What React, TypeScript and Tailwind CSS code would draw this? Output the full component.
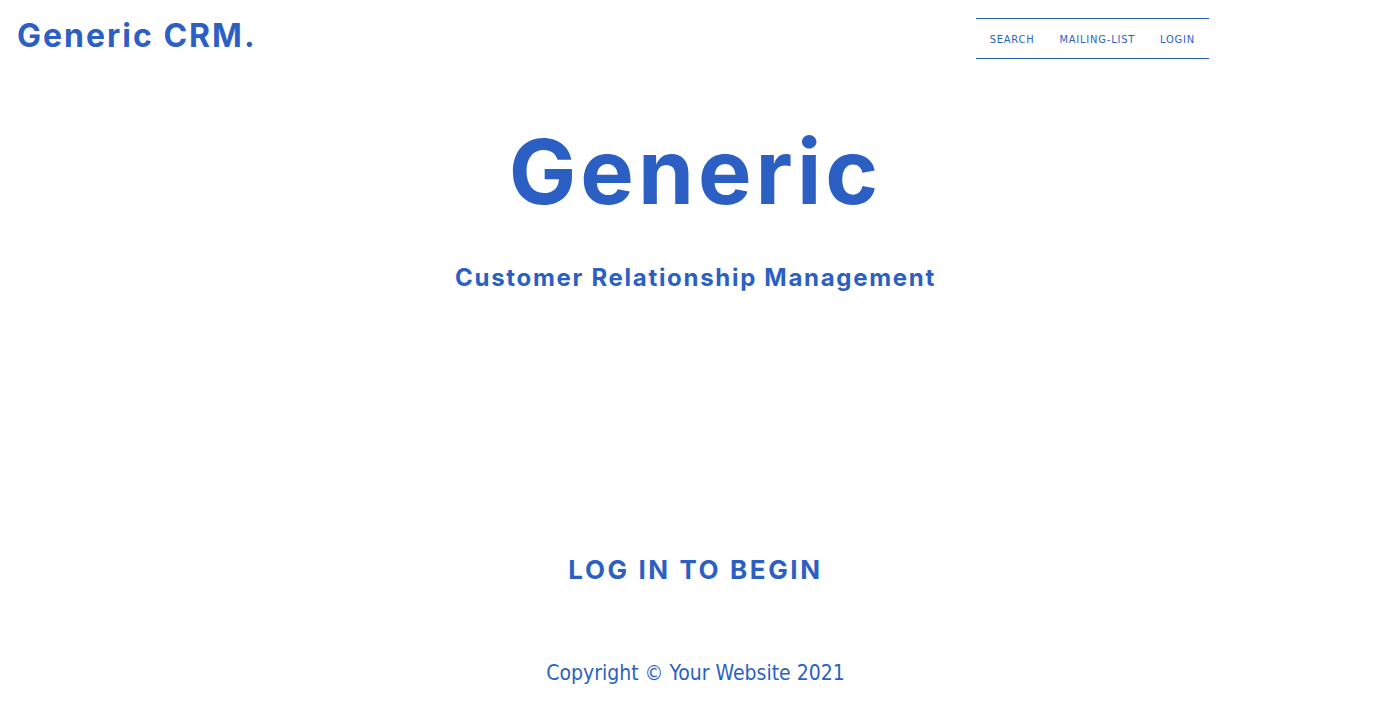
const blue = "text-[#2c5fc3]";

const navItems = ["Search", "Mailing-list", "Login"];

export default function App() {
  return (
    <div className={`flex min-h-[707px] flex-col bg-white ${blue}`}>
      <header className="flex items-start justify-between pl-[17px] pr-[182px] pt-[16px]">
        <a href="#" className="font-['Inter',sans-serif] text-[32px] font-bold leading-[40px] tracking-[2px]">
          Generic CRM.
        </a>
        <nav className="mt-[2px] flex h-[41px] items-center gap-[25px] border-y border-[#2c5fc3] pl-[14px] pr-[14px] pt-[3px] font-['DejaVu_Sans_Condensed','DejaVu_Sans',sans-serif] text-[11px] uppercase tracking-[0.8px]">
          {navItems.map((item) => (
            <a key={item} href="#">
              {item}
            </a>
          ))}
        </nav>
      </header>

      <main className="flex flex-col items-center font-['Inter',sans-serif] font-bold">
        <h1 className="mt-[53px] text-[90px] leading-[120px] tracking-[4px]">Generic</h1>
        <h2 className="mt-[31px] text-[24px] leading-[30px] tracking-[1.7px]">Customer Relationship Management</h2>
        <p className="mt-[260px] text-[26px] leading-[34px] tracking-[2.6px] uppercase">Log in to begin</p>
      </main>

      <footer className="mt-[72px] text-center font-['DejaVu_Sans_Condensed','DejaVu_Sans',sans-serif] text-[21px] leading-[28px]">
        Copyright © Your Website 2021
      </footer>
    </div>
  );
}
